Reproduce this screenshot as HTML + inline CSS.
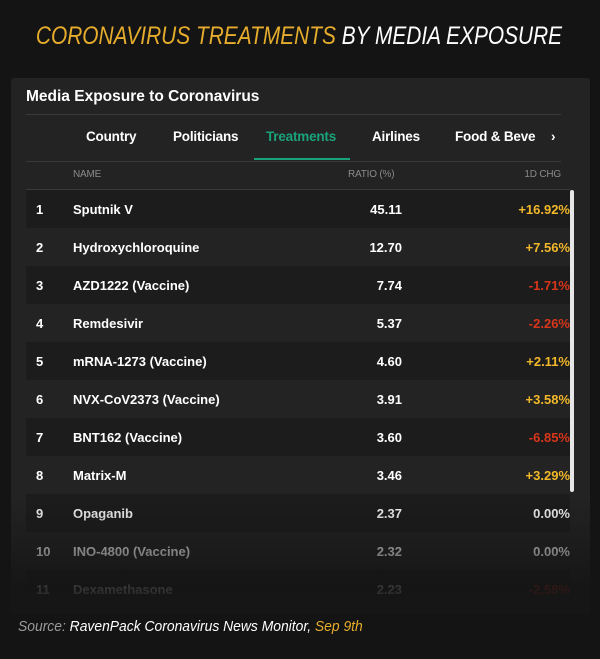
<!DOCTYPE html>
<html><head><meta charset="utf-8"><style>
*{margin:0;padding:0;box-sizing:border-box}
body{width:600px;height:659px;background:#141414;font-family:"Liberation Sans",Arial,sans-serif;position:relative;overflow:hidden}
.title{position:absolute;top:22px;left:299px;white-space:nowrap;font-style:italic;font-size:25px;color:#fff;transform:translateX(-50%) scaleX(0.835);transform-origin:center}
.title span{color:#e6ac2c}
.panel{position:absolute;left:11px;top:78px;width:579px;height:535px;background:#232323;border-radius:3px}
.ph{position:absolute;left:15px;top:10px;font-weight:bold;font-size:15.5px;color:#fff}
.l{position:absolute;left:15px;right:29px;height:1px;background:#3a3a3a}
.tab{position:absolute;top:51px;font-weight:bold;font-size:13.5px;color:#fff;letter-spacing:-0.2px}
.ul{position:absolute;left:243px;top:80px;width:96px;height:2px;background:#1aa37a}
.hd{position:absolute;top:91px;font-size:10px;color:#8a8a8a;letter-spacing:-0.2px}
.row{position:absolute;left:15px;width:544px;height:38px;font-weight:bold;font-size:13px;color:#fff}
.row.d{background:#1c1c1c}
.row div{position:absolute;top:12px}
.n{left:10px}.nm{left:47px}.r{right:168px}.c{right:0}
.y{color:#f2b82a}.rd{color:#d8361a}
.sb{position:absolute;left:559px;top:112px;width:4px;height:302px;background:#e6e6e6;border-radius:2px}
.fade{position:absolute;left:0;top:420px;width:579px;height:116px;background:linear-gradient(rgba(20,20,20,0),rgba(20,20,20,0.35) 30%,rgba(20,20,20,0.85) 75%,#161616)}
.src{position:absolute;left:18px;top:618px;font-style:italic;font-size:15px;color:#fff;white-space:nowrap;transform:scaleX(0.925);transform-origin:left}
.src .g{color:#9a9a9a}.src .o{color:#e6ac2c}
</style></head><body>
<div class="title"><span>CORONAVIRUS TREATMENTS</span> BY MEDIA EXPOSURE</div>
<div class="panel">
<div class="ph">Media Exposure to Coronavirus</div>
<div class="l" style="top:36px"></div>
<div class="tab" style="left:75px">Country</div>
<div class="tab" style="left:162px">Politicians</div>
<div class="tab" style="left:255px;color:#1aa37a">Treatments</div>
<div class="tab" style="left:361px">Airlines</div>
<div class="tab" style="left:444px">Food &amp; Beve</div>
<div class="tab" style="left:540px">›</div>
<div class="l" style="top:83px"></div>
<div class="ul"></div>
<div class="hd" style="left:62px">NAME</div>
<div class="hd" style="left:337px">RATIO (%)</div>
<div class="hd" style="right:29px">1D CHG</div>
<div class="l" style="top:111px;right:20px"></div>
<div class="row d" style="top:112px"><div class="n">1</div><div class="nm">Sputnik V</div><div class="r">45.11</div><div class="c y">+16.92%</div></div>
<div class="row" style="top:150px"><div class="n">2</div><div class="nm">Hydroxychloroquine</div><div class="r">12.70</div><div class="c y">+7.56%</div></div>
<div class="row d" style="top:188px"><div class="n">3</div><div class="nm">AZD1222 (Vaccine)</div><div class="r">7.74</div><div class="c rd">-1.71%</div></div>
<div class="row" style="top:226px"><div class="n">4</div><div class="nm">Remdesivir</div><div class="r">5.37</div><div class="c rd">-2.26%</div></div>
<div class="row d" style="top:264px"><div class="n">5</div><div class="nm">mRNA-1273 (Vaccine)</div><div class="r">4.60</div><div class="c y">+2.11%</div></div>
<div class="row" style="top:302px"><div class="n">6</div><div class="nm">NVX-CoV2373 (Vaccine)</div><div class="r">3.91</div><div class="c y">+3.58%</div></div>
<div class="row d" style="top:340px"><div class="n">7</div><div class="nm">BNT162 (Vaccine)</div><div class="r">3.60</div><div class="c rd">-6.85%</div></div>
<div class="row" style="top:378px"><div class="n">8</div><div class="nm">Matrix-M</div><div class="r">3.46</div><div class="c y">+3.29%</div></div>
<div class="row d" style="top:416px"><div class="n">9</div><div class="nm">Opaganib</div><div class="r">2.37</div><div class="c">0.00%</div></div>
<div class="row" style="top:454px"><div class="n">10</div><div class="nm">INO-4800 (Vaccine)</div><div class="r">2.32</div><div class="c">0.00%</div></div>
<div class="row d" style="top:492px"><div class="n">11</div><div class="nm">Dexamethasone</div><div class="r">2.23</div><div class="c rd">-2.58%</div></div>
<div class="sb"></div>
<div class="fade"></div>
</div>
<div class="src"><span class="g">Source:</span> RavenPack Coronavirus News Monitor, <span class="o">Sep 9th</span></div>
</body></html>
